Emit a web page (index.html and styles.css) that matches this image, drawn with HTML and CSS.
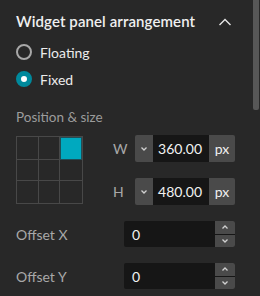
FILE: index.html
```html
<!DOCTYPE html>
<html lang="en">
<head>
    <meta charset="UTF-8">
    <meta name="viewport" content="width=device-width, initial-scale=1.0">
    <title>Widget panel arrangement</title>
    <link rel="stylesheet" href="styles.css">
</head>
<body>
    <div class="panel">
        <div class="header">
            <span class="title">Widget panel arrangement</span>
            <svg class="collapse" width="14" height="10" viewBox="0 0 14 10">
                <polyline points="1.5,8 7,2.5 12.5,8" fill="none" stroke="#e6e6e6" stroke-width="1.4"/>
            </svg>
        </div>

        <div class="radios">
            <label class="radio">
                <span class="dot"></span>
                <span>Floating</span>
            </label>
            <label class="radio checked">
                <span class="dot"></span>
                <span>Fixed</span>
            </label>
        </div>

        <div class="section-label">Position &amp; size</div>

        <div class="pos-size">
            <div class="anchor-grid">
                <div class="cell"></div>
                <div class="cell"></div>
                <div class="cell active"></div>
                <div class="cell"></div>
                <div class="cell"></div>
                <div class="cell"></div>
                <div class="cell"></div>
                <div class="cell"></div>
                <div class="cell"></div>
            </div>
            <div class="sizes">
                <div class="size-row">
                    <span class="size-label">W</span>
                    <div class="size-input">
                        <span class="drop">
                            <svg width="8" height="6" viewBox="0 0 8 6"><polyline points="1.5,1.5 4,4 6.5,1.5" fill="none" stroke="#d0d0d0" stroke-width="1.3"/></svg>
                        </span>
                        <span class="value">360.00</span>
                        <span class="unit">px</span>
                    </div>
                </div>
                <div class="size-row">
                    <span class="size-label">H</span>
                    <div class="size-input">
                        <span class="drop">
                            <svg width="8" height="6" viewBox="0 0 8 6"><polyline points="1.5,1.5 4,4 6.5,1.5" fill="none" stroke="#d0d0d0" stroke-width="1.3"/></svg>
                        </span>
                        <span class="value">480.00</span>
                        <span class="unit">px</span>
                    </div>
                </div>
            </div>
        </div>

        <div class="offset-row">
            <span class="offset-label">Offset X</span>
            <div class="number-input">
                <span class="number">0</span>
                <span class="spinner">
                    <span class="spin"><svg width="8" height="6" viewBox="0 0 8 6"><polyline points="1.5,4.5 4,2 6.5,4.5" fill="none" stroke="#d0d0d0" stroke-width="1.3"/></svg></span>
                    <span class="spin"><svg width="8" height="6" viewBox="0 0 8 6"><polyline points="1.5,1.5 4,4 6.5,1.5" fill="none" stroke="#d0d0d0" stroke-width="1.3"/></svg></span>
                </span>
            </div>
        </div>
        <div class="offset-row">
            <span class="offset-label">Offset Y</span>
            <div class="number-input">
                <span class="number">0</span>
                <span class="spinner">
                    <span class="spin"><svg width="8" height="6" viewBox="0 0 8 6"><polyline points="1.5,4.5 4,2 6.5,4.5" fill="none" stroke="#d0d0d0" stroke-width="1.3"/></svg></span>
                    <span class="spin"><svg width="8" height="6" viewBox="0 0 8 6"><polyline points="1.5,1.5 4,4 6.5,1.5" fill="none" stroke="#d0d0d0" stroke-width="1.3"/></svg></span>
                </span>
            </div>
        </div>
    </div>
    <div class="scrollbar"></div>
</body>
</html>
```

FILE: styles.css
```css
html, body {
    margin: 0;
    height: 100%;
}
body {
    background-color: #282828;
    font-family: "Lato", "Open Sans", sans-serif;
    color: #e8e8e8;
    overflow: hidden;
    position: relative;
}
.panel {
    padding: 0 16px;
}
.header {
    display: flex;
    align-items: center;
    justify-content: space-between;
    height: 41px;
    padding-right: 12px;
}
.title {
    font-size: 15px;
    font-weight: 600;
    color: #f0f0f0;
    letter-spacing: 0.1px;
}
.collapse {
    display: block;
    margin-top: 2px;
}
.radios {
    display: flex;
    flex-direction: column;
    gap: 7px;
    padding-top: 1px;
}
.radio {
    display: flex;
    align-items: center;
    gap: 8px;
    height: 20px;
    font-size: 14px;
    color: #ececec;
}
.dot {
    width: 12px;
    height: 12px;
    border: 2px solid #a8a8a8;
    border-radius: 50%;
    box-sizing: content-box;
}
.radio.checked .dot {
    border-color: #00899c;
    background-color: #ffffff;
    width: 6px;
    height: 6px;
    border-width: 5px;
}
.section-label {
    margin-top: 20px;
    font-size: 13.5px;
    color: #9c9c9c;
}
.pos-size {
    display: flex;
    margin-top: 11px;
    gap: 30px;
}
.anchor-grid {
    display: grid;
    grid-template-columns: 22px 21px 22px;
    grid-template-rows: 23px 21px 22px;
    border: 1px solid #484848;
    width: 65px;
    height: 66px;
}
.cell {
    border-right: 1px solid #484848;
    border-bottom: 1px solid #484848;
}
.cell:nth-child(3n) {
    border-right: none;
}
.cell:nth-child(n+7) {
    border-bottom: none;
}
.cell.active {
    background-color: #00a9bf;
    border: 1px solid #1f4f58;
}
.sizes {
    display: flex;
    flex-direction: column;
    gap: 16px;
    margin-top: -1px;
}
.size-row {
    display: flex;
    align-items: center;
}
.size-label {
    width: 22px;
    font-size: 14px;
    color: #a8a8a8;
}
.size-input {
    display: flex;
    height: 27px;
    border-radius: 2px;
    overflow: hidden;
}
.drop {
    width: 18px;
    background-color: #4a4a4a;
    display: flex;
    align-items: center;
    justify-content: center;
}
.value {
    width: 56px;
    background-color: #161616;
    font-size: 14px;
    color: #f2f2f2;
    display: flex;
    align-items: center;
    justify-content: flex-end;
    padding-right: 7px;
    box-sizing: border-box;
}
.unit {
    width: 26px;
    background-color: #4a4a4a;
    font-size: 14px;
    color: #f0f0f0;
    display: flex;
    align-items: center;
    justify-content: center;
}
.offset-row {
    display: flex;
    align-items: center;
    justify-content: space-between;
    width: 219px;
    margin-top: 16px;
}
.offset-label {
    font-size: 14px;
    color: #a8a8a8;
}
.number-input {
    display: flex;
    width: 111px;
    height: 26px;
    background-color: #161616;
    border-radius: 2px;
    overflow: hidden;
}
.number {
    flex: 1;
    font-size: 14px;
    color: #f2f2f2;
    display: flex;
    align-items: center;
    padding-left: 8px;
}
.spinner {
    display: flex;
    flex-direction: column;
    gap: 1px;
    width: 20px;
}
.spin {
    flex: 1;
    background-color: #4a4a4a;
    display: flex;
    align-items: center;
    justify-content: center;
}
.scrollbar {
    position: absolute;
    top: 0;
    right: 1px;
    width: 6px;
    height: 110px;
    background-color: #575757;
    border-radius: 0 0 2px 2px;
}
```
